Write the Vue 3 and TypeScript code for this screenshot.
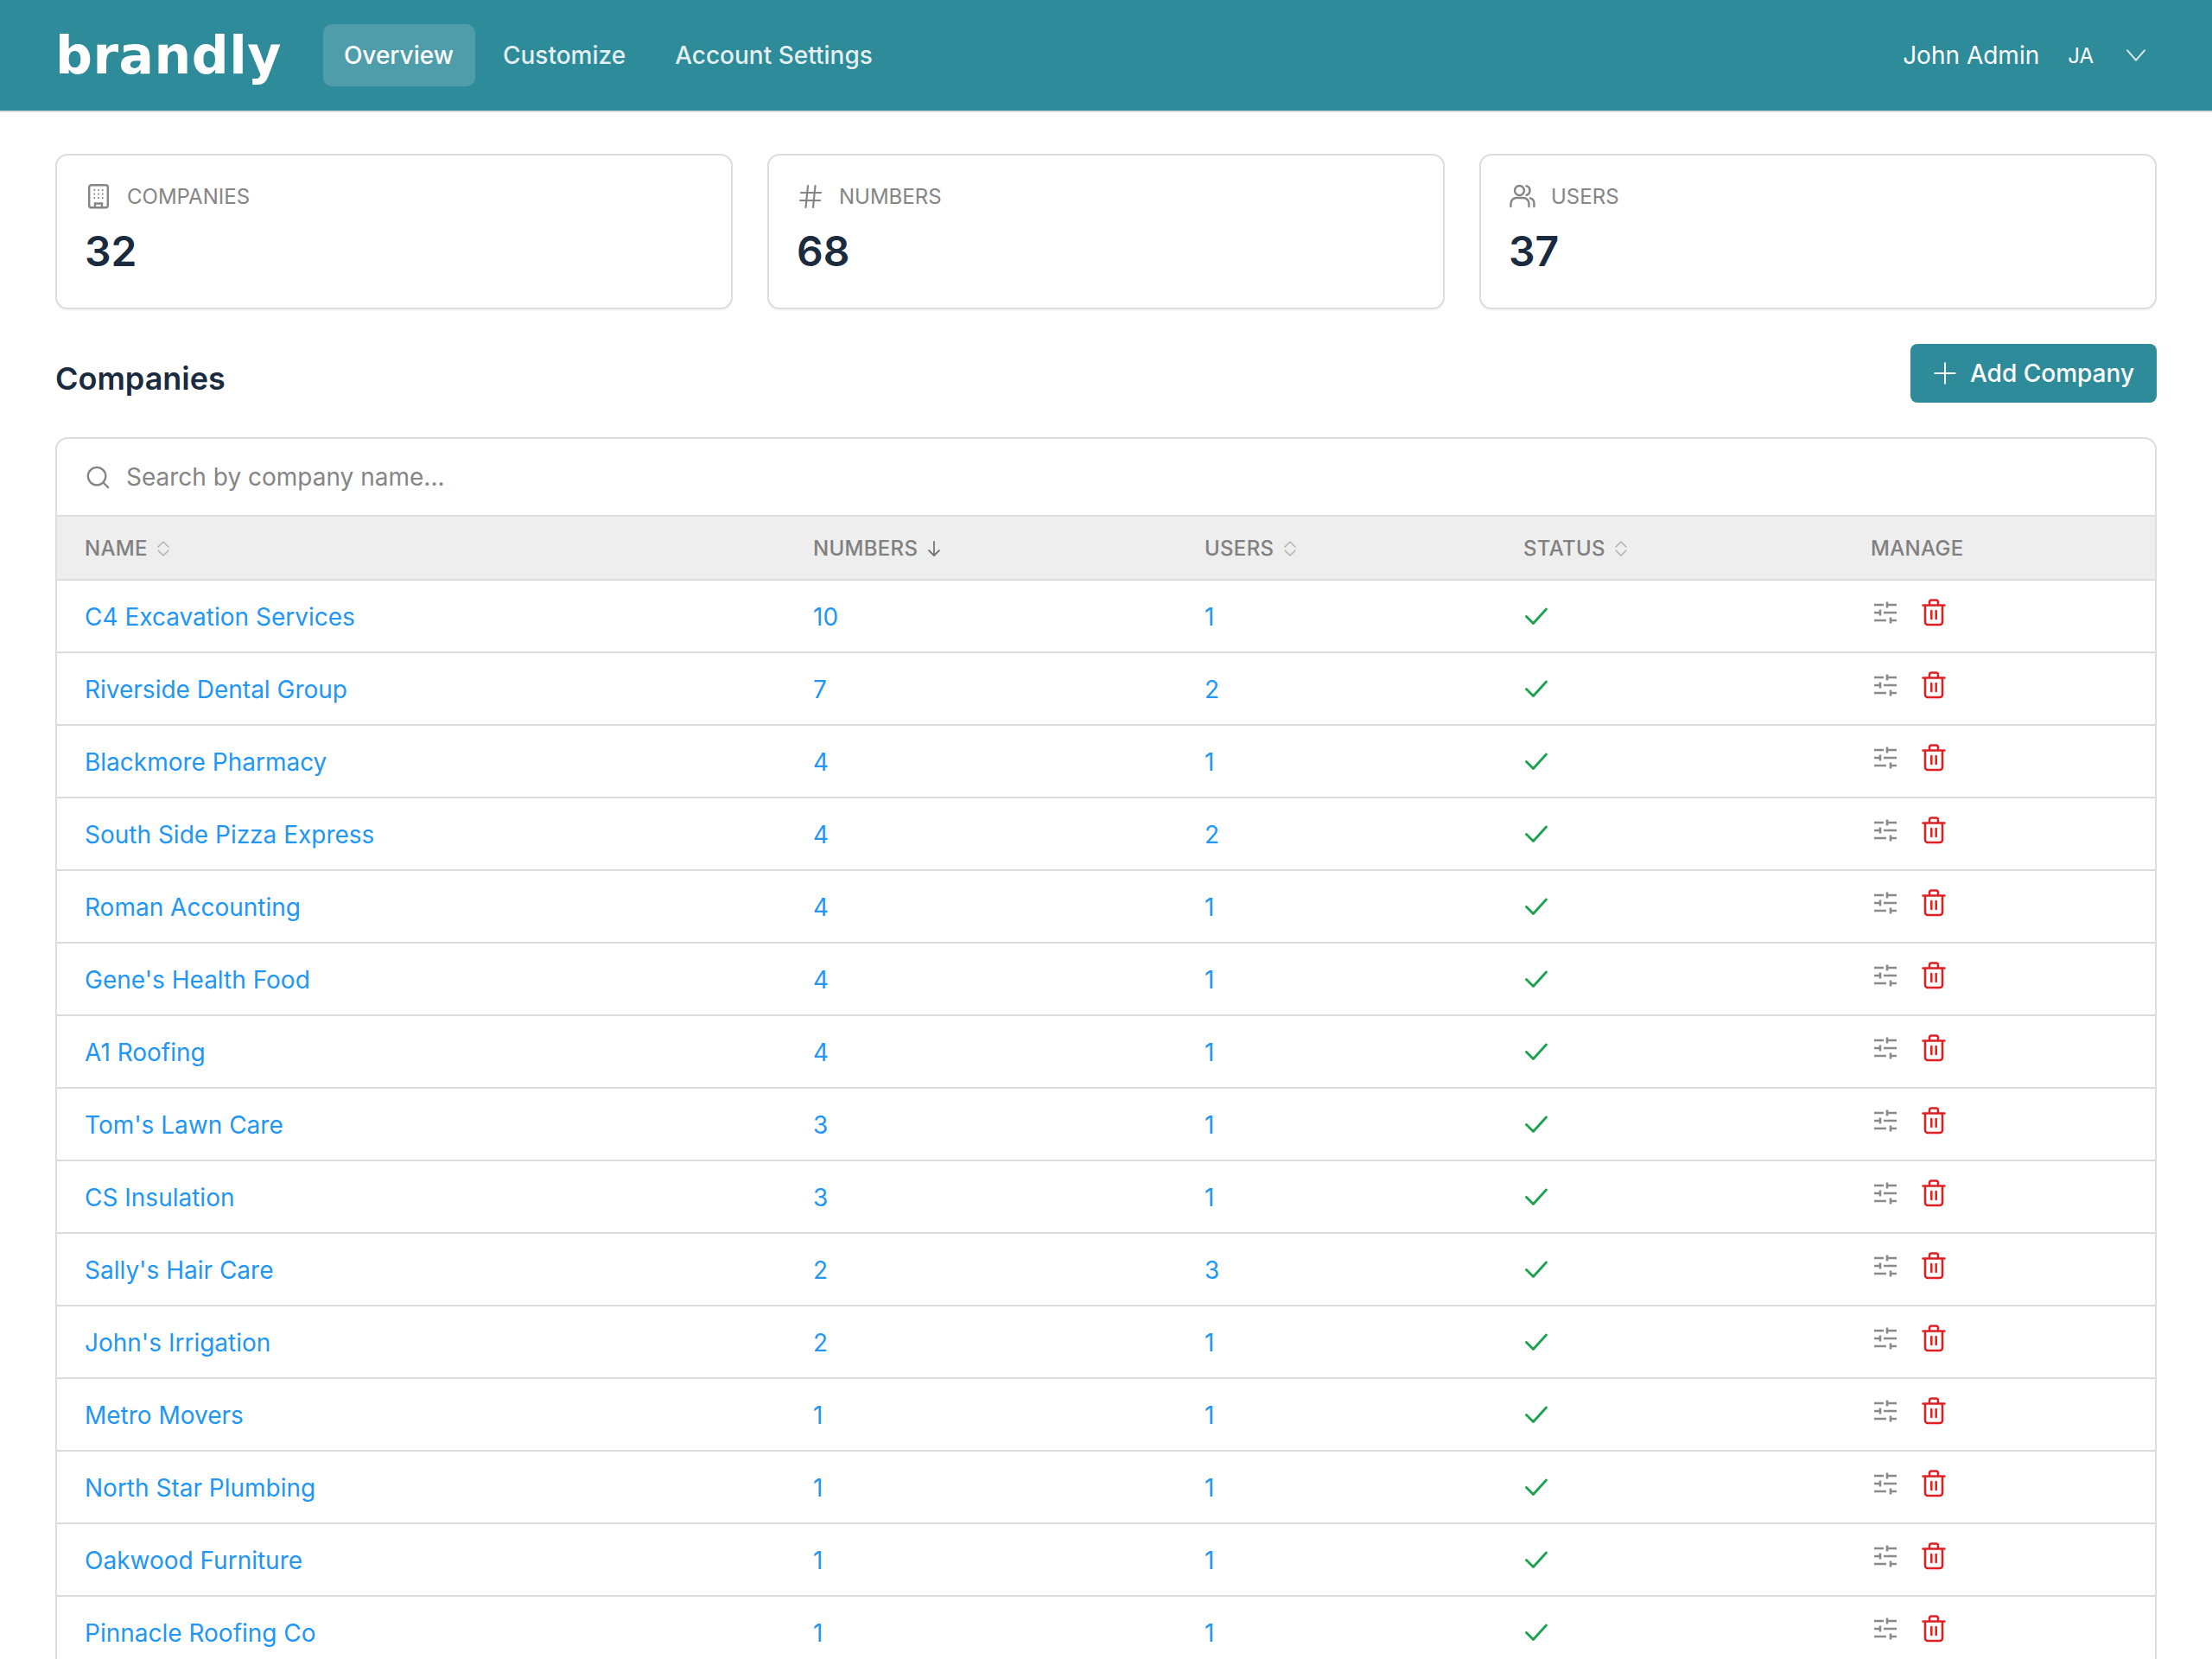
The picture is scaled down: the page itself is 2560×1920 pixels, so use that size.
<script setup lang="ts">
interface Row { name: string; numbers: number; users: number }
const rows: Row[] = [
  { name: 'C4 Excavation Services', numbers: 10, users: 1 },
  { name: 'Riverside Dental Group', numbers: 7, users: 2 },
  { name: 'Blackmore Pharmacy', numbers: 4, users: 1 },
  { name: 'South Side Pizza Express', numbers: 4, users: 2 },
  { name: 'Roman Accounting', numbers: 4, users: 1 },
  { name: "Gene's Health Food", numbers: 4, users: 1 },
  { name: 'A1 Roofing', numbers: 4, users: 1 },
  { name: "Tom's Lawn Care", numbers: 3, users: 1 },
  { name: 'CS Insulation', numbers: 3, users: 1 },
  { name: "Sally's Hair Care", numbers: 2, users: 3 },
  { name: "John's Irrigation", numbers: 2, users: 1 },
  { name: 'Metro Movers', numbers: 1, users: 1 },
  { name: 'North Star Plumbing', numbers: 1, users: 1 },
  { name: 'Oakwood Furniture', numbers: 1, users: 1 },
  { name: 'Pinnacle Roofing Co', numbers: 1, users: 1 },
]
</script>

<template>
  <div class="page">
    <header class="topbar">
      <div class="logo">brandly</div>
      <nav class="nav">
        <a class="nav-item active">Overview</a>
        <a class="nav-item">Customize</a>
        <a class="nav-item">Account Settings</a>
      </nav>
      <div class="user">
        <span class="user-name">John Admin</span>
        <span class="user-init">JA</span>
        <svg class="chev" viewBox="0 0 24 24" fill="none" stroke="currentColor" stroke-width="1.500" stroke-linecap="round" stroke-linejoin="round"><path d="M5 8l7 8 7-8" /></svg>
      </div>
    </header>

    <main class="main">
      <section class="stats">
        <div class="stat">
          <div class="stat-label">
            <svg class="stat-icon" viewBox="0 0 30 30" fill="none" stroke="currentColor" stroke-width="2.400"><rect x="4.200" y="2.200" width="21.600" height="26" rx="2.500" /><path d="M11 28v-4.500h8V28" /><path d="M9.500 8h1.600M14.200 8h1.600M18.900 8h1.600M9.500 12.500h1.600M14.200 12.500h1.600M18.900 12.500h1.600M9.500 17h1.600M14.200 17h1.600M18.900 17h1.600" stroke-width="2" /></svg>
            <span>COMPANIES</span>
          </div>
          <div class="stat-value">32</div>
        </div>
        <div class="stat">
          <div class="stat-label">
            <svg class="stat-icon" viewBox="0 0 30 30" fill="none" stroke="currentColor" stroke-width="2.200" stroke-linecap="round"><path d="M4 11h23M3 20h23M12 3L9.500 28M20.500 3L18 28" /></svg>
            <span>NUMBERS</span>
          </div>
          <div class="stat-value">68</div>
        </div>
        <div class="stat">
          <div class="stat-label">
            <svg class="stat-icon" viewBox="0 0 30 30" fill="none" stroke="currentColor" stroke-width="2.400" stroke-linecap="round"><circle cx="11.500" cy="8.500" r="5.500" /><path d="M1.500 27v-3.500a6.500 6.500 0 0 1 6.500-6.500h8a6.500 6.500 0 0 1 6.500 6.500V27" /><path d="M19.500 3.200a5.500 5.500 0 0 1 0 10.600M24 17.300a6.500 6.500 0 0 1 4.500 6.200V27" /></svg>
            <span>USERS</span>
          </div>
          <div class="stat-value">37</div>
        </div>
      </section>

      <section class="head">
        <h2 class="title">Companies</h2>
        <button class="add">
          <svg class="plus" viewBox="0 0 24 24" fill="none" stroke="currentColor" stroke-width="1.700" stroke-linecap="round"><path d="M12 2v20M2 12h20" /></svg>
          <span>Add Company</span>
        </button>
      </section>

      <section class="panel">
        <div class="search">
          <svg class="search-icon" viewBox="0 0 30 30" fill="none" stroke="currentColor" stroke-width="2.500" stroke-linecap="round"><circle cx="14" cy="14" r="11" /><path d="M22 22l6 6" /></svg>
          <span>Search by company name...</span>
        </div>
        <table class="table">
          <colgroup>
            <col class="c1" /><col class="c2" /><col class="c3" /><col class="c4" /><col />
          </colgroup>
          <thead>
            <tr>
              <th>NAME <svg class="sort" viewBox="0 0 16 20" fill="none" stroke="currentColor" stroke-width="1.600" stroke-linecap="round" stroke-linejoin="round"><path d="M2 8L8 2l6 6M2 12l6 6 6-6" /></svg></th>
              <th>NUMBERS <svg class="sort dark" viewBox="0 0 16 20" fill="none" stroke="currentColor" stroke-width="1.800" stroke-linecap="round" stroke-linejoin="round"><path d="M8 2v16M2 12l6 6 6-6" /></svg></th>
              <th>USERS <svg class="sort" viewBox="0 0 16 20" fill="none" stroke="currentColor" stroke-width="1.600" stroke-linecap="round" stroke-linejoin="round"><path d="M2 8L8 2l6 6M2 12l6 6 6-6" /></svg></th>
              <th>STATUS <svg class="sort" viewBox="0 0 16 20" fill="none" stroke="currentColor" stroke-width="1.600" stroke-linecap="round" stroke-linejoin="round"><path d="M2 8L8 2l6 6M2 12l6 6 6-6" /></svg></th>
              <th>MANAGE</th>
            </tr>
          </thead>
          <tbody>
            <tr v-for="row in rows" :key="row.name">
              <td><a class="link">{{ row.name }}</a></td>
              <td><a class="link">{{ row.numbers }}</a></td>
              <td><a class="link">{{ row.users }}</a></td>
              <td class="status">
                <svg class="check" viewBox="0 0 30 30" fill="none" stroke="currentColor" stroke-width="2.800" stroke-linecap="round" stroke-linejoin="round"><path d="M3.500 15.500l8 8L26.500 7" /></svg>
              </td>
              <td>
                <div class="manage">
                  <svg class="sliders" viewBox="0 0 28 26" fill="none" stroke="currentColor" stroke-width="2.600"><path d="M1 4h11M16 4h11M16 .5v7M1 13h7M8 9.500v7M12 13h15M1 22h14M20 22h7M20 18.500v7" /></svg>
                  <svg class="trash" viewBox="0 0 28 32" fill="none" stroke="currentColor" stroke-width="2.500" stroke-linecap="round" stroke-linejoin="round"><path d="M1.500 7.500h25M4 7.500V27a3 3 0 0 0 3 3h14a3 3 0 0 0 3-3V7.500M9 7.500V4a2.500 2.500 0 0 1 2.500-2.500h5A2.500 2.500 0 0 1 19 4v3.500M11.300 14v9M16.700 14v9" /></svg>
                </div>
              </td>
            </tr>
          </tbody>
        </table>
      </section>
    </main>
  </div>
</template>

<style>
html, body { margin: 0; background: #fff; }
</style>

<style scoped>
.page {
  height: 1920px;
  overflow: hidden;
  background: #fff;
  color: #1a2a3f;
  font-family: Inter, "Liberation Sans", sans-serif;
  font-size: 28px;
}
.topbar {
  display: flex;
  align-items: center;
  height: 128px;
  padding: 0 71px 0 64px;
  background: #2e8b9a;
  border-bottom: 2px solid #ddd;
  color: #fff;
}
.logo {
  font-family: "DejaVu Sans", sans-serif;
  font-weight: 700;
  font-size: 60px;
  line-height: 1;
  letter-spacing: 0.500px;
  margin-right: 48px;
}
.nav { display: flex; align-items: center; gap: 8px; }
.nav-item {
  padding: 0 25px 0 24px;
  height: 72px;
  line-height: 72px;
  border-radius: 10px;
  font-weight: 500;
  color: rgba(255, 255, 255, 0.88);
}
.nav-item.active { background: rgba(255, 255, 255, 0.16); color: #fff; }
.user { display: flex; align-items: center; margin-left: auto; }
.user-init { font-size: 24px; margin-left: 33px; }
.chev { width: 34px; height: 34px; margin-left: 32px; color: rgba(255, 255, 255, 0.8); }
.main { padding: 48px 64px 0; }
.stats { display: grid; grid-template-columns: repeat(3, 1fr); gap: 40px; }
.stat {
  height: 180px;
  box-sizing: border-box;
  padding: 31px 32px 0;
  border: 2px solid #ddd;
  border-radius: 14px;
  box-shadow: 0 2px 2px rgba(0, 0, 0, 0.04);
}
.stat-label { display: flex; align-items: center; gap: 18px; color: #858585; font-size: 24px; height: 32px; }
.stat-icon { width: 30px; height: 30px; flex: none; margin-left: 1px; }
.stat-value { margin-top: 16px; font-size: 48px; font-weight: 600; line-height: 64px; color: #1a2a3f; }
.head { display: flex; align-items: center; justify-content: space-between; margin-top: 40px; }
.title { margin: 11px 0 0; font-size: 36px; font-weight: 600; color: #1a2a3f; line-height: 48px; }
.add {
  display: flex;
  align-items: center;
  gap: 15px;
  height: 68px;
  padding: 0 26px;
  border: 0;
  border-radius: 8px;
  background: #2e8b9a;
  color: #fff;
  font: inherit;
  font-weight: 500;
}
.plus { width: 28px; height: 28px; }
.panel {
  margin-top: 40px;
  border: 2px solid #ddd;
  border-bottom: 0;
  border-radius: 14px 14px 0 0;
  overflow: hidden;
}
.search { display: flex; align-items: center; gap: 19px; height: 88px; padding: 0 32px; color: #858585; font-size: 28px; }
.search-icon { width: 28px; height: 28px; flex: none; margin-left: 1px; }
.table { width: 100%; border-collapse: collapse; table-layout: fixed; }
.c1 { width: 843px; }
.c2 { width: 453px; }
.c3 { width: 369px; }
.c4 { width: 402px; }
th {
  height: 72px;
  padding: 0 32px;
  text-align: left;
  font-size: 24px;
  font-weight: 500;
  letter-spacing: 0.3px;
  color: #808080;
  background: #eee;
  border-top: 2px solid #ddd;
  border-bottom: 2px solid #ddd;
}
td { height: 80px; padding: 2px 32px 0; border-bottom: 2px solid #ddd; }
.link { color: #2196f3; }
.sort { width: 16px; height: 20px; color: #b4b4b4; vertical-align: -2px; margin-left: 4px; }
.sort.dark { color: #777; }
.check { width: 30px; height: 30px; color: #16a34a; display: block; margin-top: -2px; }
.manage { display: flex; align-items: center; gap: 28px; margin-top: -10px; }
.sliders { width: 28px; height: 26px; color: #8a8a8a; margin-left: 3px; }
.trash { width: 28px; height: 32px; color: #e02020; }
</style>
